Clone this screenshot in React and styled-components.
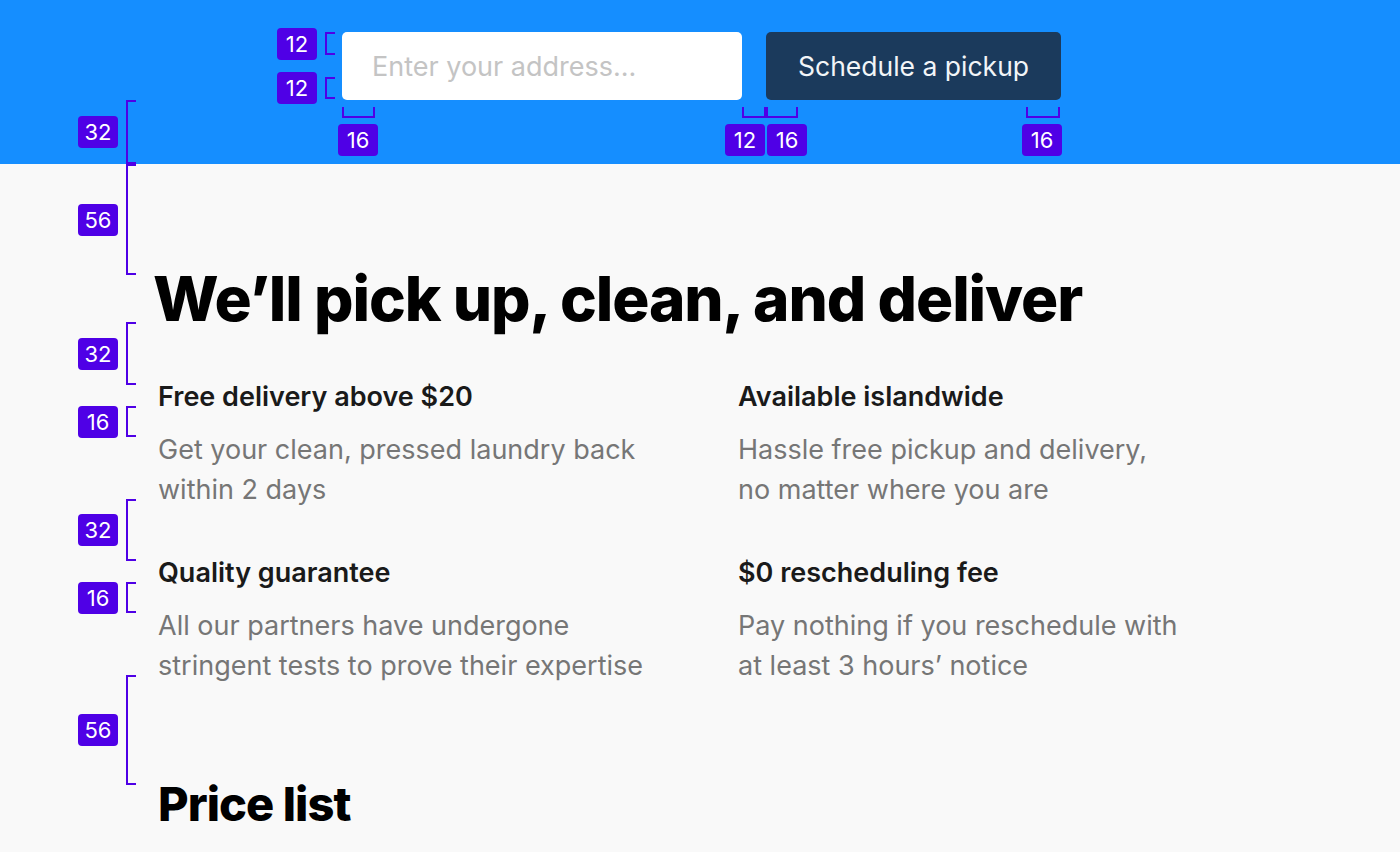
import React from 'react'
import styled, { createGlobalStyle } from 'styled-components'

const SPEC = '#4f00e6'

const vSpecs = [
  { x: 126, top: 100, height: 64, label: 32 },
  { x: 126, top: 164, height: 111, label: 56 },
  { x: 126, top: 322, height: 63, label: 32 },
  { x: 126, top: 406, height: 31, label: 16 },
  { x: 126, top: 499, height: 62, label: 32 },
  { x: 126, top: 582, height: 31, label: 16 },
  { x: 126, top: 675, height: 110, label: 56 },
  { x: 325, top: 32, height: 23, label: 12 },
  { x: 325, top: 77, height: 22, label: 12 },
]

const hSpecs = [
  { left: 342, width: 33, badge: 338, label: 16 },
  { left: 742, width: 24, badge: 725, label: 12 },
  { left: 766, width: 32, badge: 767, label: 16 },
  { left: 1026, width: 34, badge: 1022, label: 16 },
]

const features = [
  {
    title: 'Free delivery above $20',
    lines: ['Get your clean, pressed laundry back', 'within 2 days'],
  },
  {
    title: 'Available islandwide',
    lines: ['Hassle free pickup and delivery,', 'no matter where you are'],
  },
  {
    title: 'Quality guarantee',
    lines: ['All our partners have undergone', 'stringent tests to prove their expertise'],
  },
  {
    title: '$0 rescheduling fee',
    lines: ['Pay nothing if you reschedule with', 'at least 3 hours’ notice'],
  },
]

export default () => (
  <Page>
    <GlobalStyle />
    <Header>
      <PickupForm>
        <AddressInput placeholder="Enter your address..." />
        <PickupButton>Schedule a pickup</PickupButton>
      </PickupForm>
    </Header>
    <Main>
      <Heading>We’ll pick up, clean, and deliver</Heading>
      <Features>
        {features.map(f => (
          <Feature key={f.title}>
            <FeatureTitle>{f.title}</FeatureTitle>
            <FeatureText>
              {f.lines[0]}
              <br />
              {f.lines[1]}
            </FeatureText>
          </Feature>
        ))}
      </Features>
      <SubHeading>Price list</SubHeading>
    </Main>

    {vSpecs.map((s, i) => (
      <VSpec key={`v${i}`} $x={s.x} $top={s.top} $height={s.height}>
        <Badge $side="left">{s.label}</Badge>
      </VSpec>
    ))}
    {hSpecs.map((s, i) => (
      <HSpec key={`h${i}`} $left={s.left} $width={s.width}>
        <Badge $side="bottom" $offset={s.badge - s.left}>{s.label}</Badge>
      </HSpec>
    ))}
  </Page>
)

const GlobalStyle = createGlobalStyle`
  * { box-sizing: border-box; }
  html, body { margin: 0; padding: 0; }
  body {
    background: #f9f9f9;
    font-family: Inter, "Noto Sans", sans-serif;
    -webkit-font-smoothing: antialiased;
  }
`

const Page = styled.div`
  position: relative;
  min-height: 852px;
  overflow: hidden;
  background: #f9f9f9;
`

const Header = styled.header`
  background: #158eff;
  padding: 32px 0 64px 342px;
`

const PickupForm = styled.form`
  display: flex;
  gap: 24px;
  height: 68px;
`

const AddressInput = styled.input`
  width: 400px;
  height: 68px;
  border: none;
  border-radius: 5px;
  background: #fff;
  padding: 0 32px 0 30px;
  font: 400 27px Inter, sans-serif;
  color: #222;
  outline: none;
  &::placeholder {
    color: #c4c4c4;
  }
`

const PickupButton = styled.button`
  height: 68px;
  border: none;
  border-radius: 5px;
  background: #1b3a5c;
  color: #f2f5f8;
  padding: 0 32px;
  font: 400 26.5px Inter, sans-serif;
  cursor: pointer;
`

const Main = styled.main`
  padding: 104px 0 40px 156px;
`

const Heading = styled.h1`
  margin: 0 0 0 -3px;
  font-size: 62px;
  line-height: 1;
  font-weight: 800;
  letter-spacing: -0.018em;
  color: #000;
`

const Features = styled.div`
  display: grid;
  grid-template-columns: 580px 580px;
  row-gap: 47px;
  margin: 51px 0 0 2px;
`

const Feature = styled.div`
  display: flex;
  flex-direction: column;
  gap: 17px;
`

const FeatureTitle = styled.h3`
  margin: 0;
  font-size: 27px;
  line-height: 32px;
  font-weight: 600;
  color: #1a1a1a;
`

const FeatureText = styled.p`
  margin: 0;
  font-size: 27px;
  line-height: 40px;
  font-weight: 400;
  color: #767676;
`

const SubHeading = styled.h2`
  margin: 94px 0 0 2px;
  font-size: 47px;
  line-height: 1;
  font-weight: 800;
  letter-spacing: -0.02em;
  color: #000;
`

const VSpec = styled.div`
  position: absolute;
  left: ${p => p.$x}px;
  top: ${p => p.$top}px;
  height: ${p => p.$height}px;
  width: 10px;
  border: 2px solid ${SPEC};
  border-right: none;
`

const HSpec = styled.div`
  position: absolute;
  left: ${p => p.$left}px;
  top: 107px;
  width: ${p => p.$width}px;
  height: 11px;
  border: 2px solid ${SPEC};
  border-top: none;
`

const Badge = styled.span`
  position: absolute;
  width: 40px;
  height: 32px;
  border-radius: 4px;
  background: ${SPEC};
  color: #fff;
  font: 400 22px/32px Inter, sans-serif;
  text-align: center;
  ${p =>
    p.$side === 'left'
      ? `left: -50px; top: 50%; transform: translateY(-50%);`
      : `left: ${p.$offset - 2}px; top: 17px;`}
`
